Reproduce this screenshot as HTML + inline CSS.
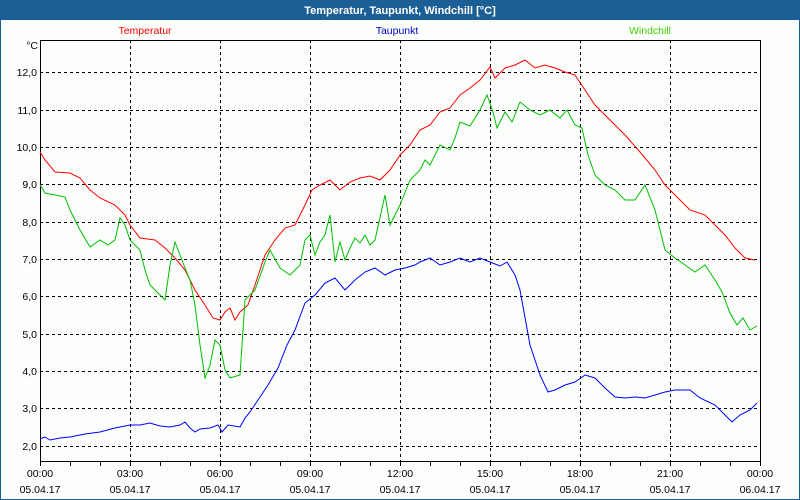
<!DOCTYPE html>
<html><head><meta charset="utf-8"><style>
html,body{margin:0;padding:0;width:800px;height:500px;overflow:hidden;background:#fcfefc;}
</style></head><body>
<svg width="800" height="500" xmlns="http://www.w3.org/2000/svg" font-family="Liberation Sans, sans-serif" font-size="10.5">
<rect x="0" y="0" width="800" height="500" fill="#1c5f96"/>
<rect x="1" y="20" width="798" height="479" fill="#fcfefc"/>
<text x="400" y="14" font-size="11" font-weight="bold" fill="#fff" text-anchor="middle">Temperatur, Taupunkt, Windchill [°C]</text>
<text x="145" y="34" fill="#ff0000" text-anchor="middle">Temperatur</text>
<text x="397" y="34" fill="#0000cc" text-anchor="middle">Taupunkt</text>
<text x="650" y="34" fill="#40d000" text-anchor="middle">Windchill</text>
<g stroke="#000" stroke-width="1" stroke-dasharray="3,3" fill="none">
<path d="M130.5 40V461M220.5 40V461M310.5 40V461M400.5 40V461M490.5 40V461M580.5 40V461M670.5 40V461"/>
<path d="M40 72.5H760M40 110.5H760M40 147.5H760M40 184.5H760M40 222.5H760M40 259.5H760M40 296.5H760M40 334.5H760M40 371.5H760M40 408.5H760M40 446.5H760"/>
</g>
<g stroke="#000" stroke-width="1" fill="none">
<path d="M40.5 40.5H760.5V461.5H40.5Z"/>
<path d="M40.5 461V466M70.5 461V466M100.5 461V466M130.5 461V466M160.5 461V466M190.5 461V466M220.5 461V466M250.5 461V466M280.5 461V466M310.5 461V466M340.5 461V466M370.5 461V466M400.5 461V466M430.5 461V466M460.5 461V466M490.5 461V466M520.5 461V466M550.5 461V466M580.5 461V466M610.5 461V466M640.5 461V466M670.5 461V466M700.5 461V466M730.5 461V466M760.5 461V466"/>
</g>
<g fill="#000" text-anchor="end">
<text x="38" y="49">°C</text>
<text x="37" y="76">12,0</text><text x="37" y="114">11,0</text><text x="37" y="151">10,0</text>
<text x="37" y="188">9,0</text><text x="37" y="226">8,0</text><text x="37" y="263">7,0</text>
<text x="37" y="300">6,0</text><text x="37" y="338">5,0</text><text x="37" y="375">4,0</text>
<text x="37" y="412">3,0</text><text x="37" y="450">2,0</text>
</g>
<g fill="#000" text-anchor="middle">
<text x="40" y="477">00:00</text><text x="130" y="477">03:00</text><text x="220" y="477">06:00</text><text x="310" y="477">09:00</text><text x="400" y="477">12:00</text><text x="490" y="477">15:00</text><text x="580" y="477">18:00</text><text x="670" y="477">21:00</text><text x="760" y="477">00:00</text>
<text x="40" y="493">05.04.17</text><text x="130" y="493">05.04.17</text><text x="220" y="493">05.04.17</text><text x="310" y="493">05.04.17</text><text x="400" y="493">05.04.17</text><text x="490" y="493">05.04.17</text><text x="580" y="493">05.04.17</text><text x="670" y="493">05.04.17</text><text x="760" y="493">06.04.17</text>
</g>
<g fill="none" stroke-width="1">
<polyline stroke="#ff0000" points="40,152 45,160 55,172 70,173 80,178 90,190 100,198 115,205 125,215 130,225 140,238 155,240 165,248 175,258 185,270 195,290 205,305 213,318 220,320 225,312 230,308 235,320 240,312 248,305 255,285 265,255 275,240 285,228 295,225 305,205 312,190 320,185 330,180 340,190 350,182 360,178 370,176 380,180 390,170 400,155 410,145 420,130 430,125 440,112 450,108 460,95 470,88 480,80 490,67 495,78 505,68 515,65 525,60 535,68 545,65 555,68 565,72 575,75 585,90 595,105 610,120 625,135 640,152 655,170 665,185 680,200 690,210 705,215 715,225 725,235 735,248 745,258 755,260"/>
<polyline stroke="#00c000" points="40,185 45,193 55,195 65,197 70,210 80,230 90,247 100,240 108,245 115,240 120,218 125,225 130,240 140,250 145,270 150,285 160,295 165,300 170,265 175,242 180,255 185,268 190,280 195,305 200,345 205,378 210,365 215,340 220,345 225,370 230,378 240,375 245,300 255,290 265,262 270,250 280,268 290,275 300,265 305,240 310,235 315,255 320,242 325,235 330,215 335,262 340,242 345,260 350,248 355,238 360,243 365,235 370,245 375,240 385,195 390,225 395,215 400,205 410,180 420,170 425,160 430,165 440,145 450,150 455,138 460,122 470,126 480,110 487,95 493,112 497,128 505,112 512,122 520,102 530,110 540,115 550,110 560,118 567,110 575,125 582,128 588,155 595,175 605,185 615,190 625,200 635,200 645,185 655,210 665,250 675,258 685,265 695,272 705,265 715,280 722,292 730,313 737,325 743,318 750,330 757,326"/>
<polyline stroke="#0000ff" points="40,439 45,437 50,440 60,438 70,437 85,434 100,432 115,428 130,425 140,425 150,423 160,426 170,427 180,425 185,422 190,428 195,432 200,429 210,428 218,425 222,432 228,425 240,427 245,418 250,412 258,400 268,385 278,368 287,345 295,330 305,303 315,295 325,283 335,278 345,290 355,280 365,272 375,268 385,275 395,270 405,268 415,265 420,262 430,258 440,265 450,262 460,258 470,262 480,258 490,262 500,266 507,262 515,275 520,290 530,345 540,375 548,392 555,390 565,385 575,382 585,375 595,378 605,388 615,397 625,398 635,397 645,398 655,395 665,392 675,390 690,390 700,398 715,405 725,415 732,422 740,415 750,410 757,403"/>
</g>
</svg>
</body></html>
